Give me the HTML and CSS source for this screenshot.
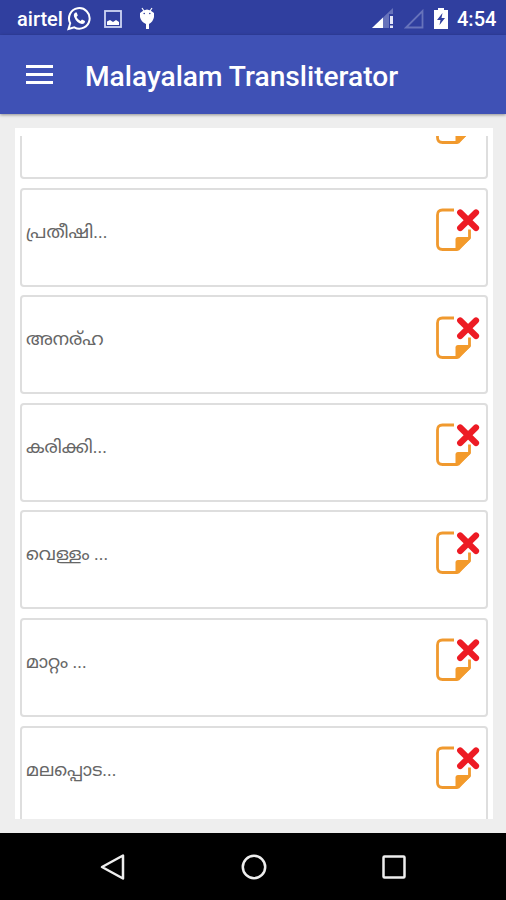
FILE: index.html
```html
<!DOCTYPE html>
<html lang="ml">
<head>
<meta charset="utf-8">
<title>Malayalam Transliterator</title>
<link rel="stylesheet" href="styles.css">
</head>
<body>
<svg class="defs" width="0" height="0" aria-hidden="true">
  <symbol id="note-delete" viewBox="0 0 46 46">
    <path d="M19 3H7.500Q2.500 3 2.500 8V37.500Q2.500 42.500 7.500 42.500H22L34.500 31V22.500" fill="none" stroke="#f0992e" stroke-width="2.800" stroke-linejoin="round"/>
    <path d="M20.500 43.500V32.500Q20.500 30 23 30H35.500L34.500 32.500L24 43.500Z" fill="#f39a2b"/>
    <path d="M25 5.500L41 21M41 5.500L25 21" fill="none" stroke="#fff" stroke-width="9"/>
    <path d="M25.200 5.500L41 21M41 5.500L25.200 21" fill="none" stroke="#ed1b24" stroke-width="6.200" stroke-linecap="round"/>
  </symbol>
</svg>
<div class="status">
  <span class="carrier">airtel</span>
  <svg class="whatsapp" width="25" height="25" viewBox="0 0 25 25"><path d="M1.500 23L3.200 17.200A10.300 10.300 0 1 1 7.300 21.400Z" fill="none" stroke="#fff" stroke-width="2"/><path d="M8.500 6.500Q6 8 7.200 11Q9.500 17 15 18Q18 18 18 15L15 13.500L13.500 15Q10.500 13.500 9.500 11L10.800 9.500L9.700 6.500Z" fill="#fff"/></svg>
  <svg class="photo" width="18" height="18" viewBox="0 0 18 18"><rect x="1" y="1" width="16" height="16" fill="none" stroke="#cfd5f3" stroke-width="1.800"/><path d="M3 15V11.500L6 10L9 12L12 10L15 12V15Z" fill="#fff"/></svg>
  <svg class="debug" width="18" height="23" viewBox="0 0 18 23"><path d="M4 1L6 4M14 1L12 4" stroke="#fff" stroke-width="1.200"/><path d="M2 6Q9-1 16 6V10Q15 15 11 17V22H8V17Q3 15 2 10Z" fill="#fff"/><circle cx="6.200" cy="6.500" r=".8" fill="#303f9f"/><circle cx="11.800" cy="6.500" r=".8" fill="#303f9f"/></svg>
  <span class="spacer"></span>
  <svg class="signal" width="22" height="21" viewBox="0 0 22 21"><path d="M0 20L21 0V6H17V20Z" fill="#6773bb"/><path d="M0 20L11 9.500V20Z" fill="#fff"/><path d="M18 8h3v8h-3zM18 17.500h3V20h-3z" fill="#e5e8f8"/></svg>
  <svg class="empty" width="20" height="20" viewBox="0 0 20 20"><path d="M2 18.500H18.500V2Z" fill="none" stroke="#6773bb" stroke-width="1.800"/></svg>
  <svg class="battery" width="14" height="21" viewBox="0 0 14 21"><path d="M4 0H10V2H14V21H0V2H4Z" fill="#fff"/><path d="M8.500 5L3 12H6.500L5.500 17L11 10H7.500Z" fill="#303f9f"/></svg>
  <span class="clock">4:54</span>
</div>
<header class="appbar">
  <svg width="27" height="21" viewBox="0 0 27 21"><path d="M0 2.500H27M0 10.500H27M0 18.500H27" stroke="#fff" stroke-width="3"/></svg>
  <h1>Malayalam Transliterator</h1>
</header>
<main>
  <div class="panel"><div class="list">
    <div class="card"><svg class="note"><use href="#note-delete"/></svg></div>
    <div class="card"><span>പ്രതീഷി...</span><svg class="note"><use href="#note-delete"/></svg></div>
    <div class="card"><span>അനര്‌ഹ</span><svg class="note"><use href="#note-delete"/></svg></div>
    <div class="card"><span>കരിക്കി...</span><svg class="note"><use href="#note-delete"/></svg></div>
    <div class="card"><span>വെള്ളം ...</span><svg class="note"><use href="#note-delete"/></svg></div>
    <div class="card"><span>മാറ്റം ...</span><svg class="note"><use href="#note-delete"/></svg></div>
    <div class="card"><span>മലപ്പൊട...</span><svg class="note"><use href="#note-delete"/></svg></div>
  </div></div>
</main>
<nav class="navbar">
  <svg width="28" height="28" viewBox="0 0 28 28"><path d="M3 14L24 2.500V25.500Z"/></svg>
  <svg width="28" height="28" viewBox="0 0 28 28"><circle cx="14" cy="14" r="11.200"/></svg>
  <svg width="28" height="28" viewBox="0 0 28 28"><rect x="3.500" y="3.500" width="21" height="21" rx="1"/></svg>
</nav>
</body>
</html>
```
FILE: styles.css
```css
* { box-sizing: border-box; }
body { margin: 0; width: 506px; height: 900px; overflow: hidden; display: flex; flex-direction: column; background: #eee; font-family: Roboto, "Noto Sans Malayalam", "Noto Sans", sans-serif; }
svg { display: block; flex: none; }
.defs { position: absolute; }
.status { height: 35px; flex: none; background: #303f9f; color: #fff; display: flex; align-items: center; padding: 2px 10px 0 17px; font-size: 20px; font-weight: 500; }
.carrier { width: 50px; white-space: nowrap; }
.photo { margin-left: 12px; }
.debug { margin-left: 16px; }
.spacer { flex: 1; }
.empty { margin-left: 10px; }
.battery { margin-left: 10px; }
.clock { width: 39px; margin-left: 9px; }
.appbar { height: 79px; flex: none; background: #3f51b5; color: #fff; display: flex; align-items: center; padding: 3px 0 0 26px; box-shadow: 0 1px 3px rgba(0,0,0,.4); }
.appbar svg { margin-top: -3px; }
h1 { margin: 0 0 0 32px; font-size: 28.150px; font-weight: 500; white-space: nowrap; }
main { height: 719px; flex: none; padding: 14px 13px 14px 15px; }
.panel { height: 691px; background: #fff; padding: 8px 5px 0; }
.list { height: 683px; overflow: hidden; display: flex; flex-direction: column; justify-content: flex-start; gap: 8.600px; }
.card { height: 99px; flex: none; border: 2px solid #dedede; border-radius: 4px; display: flex; justify-content: space-between; padding: 17.500px 5px 0 4px; color: #666; font-size: 17.900px; }
.card:first-child { margin-top: -56px; }
.card span { line-height: 24px; margin-top: 12.500px; white-space: nowrap; }
.note { width: 46px; height: 46px; margin-left: auto; }
.navbar { height: 67px; flex: none; background: #000; display: flex; align-items: center; justify-content: center; gap: 112.500px; padding-left: 1px; }
.navbar svg { fill: none; stroke: #eee; stroke-width: 2.500; stroke-linejoin: round; }
```
